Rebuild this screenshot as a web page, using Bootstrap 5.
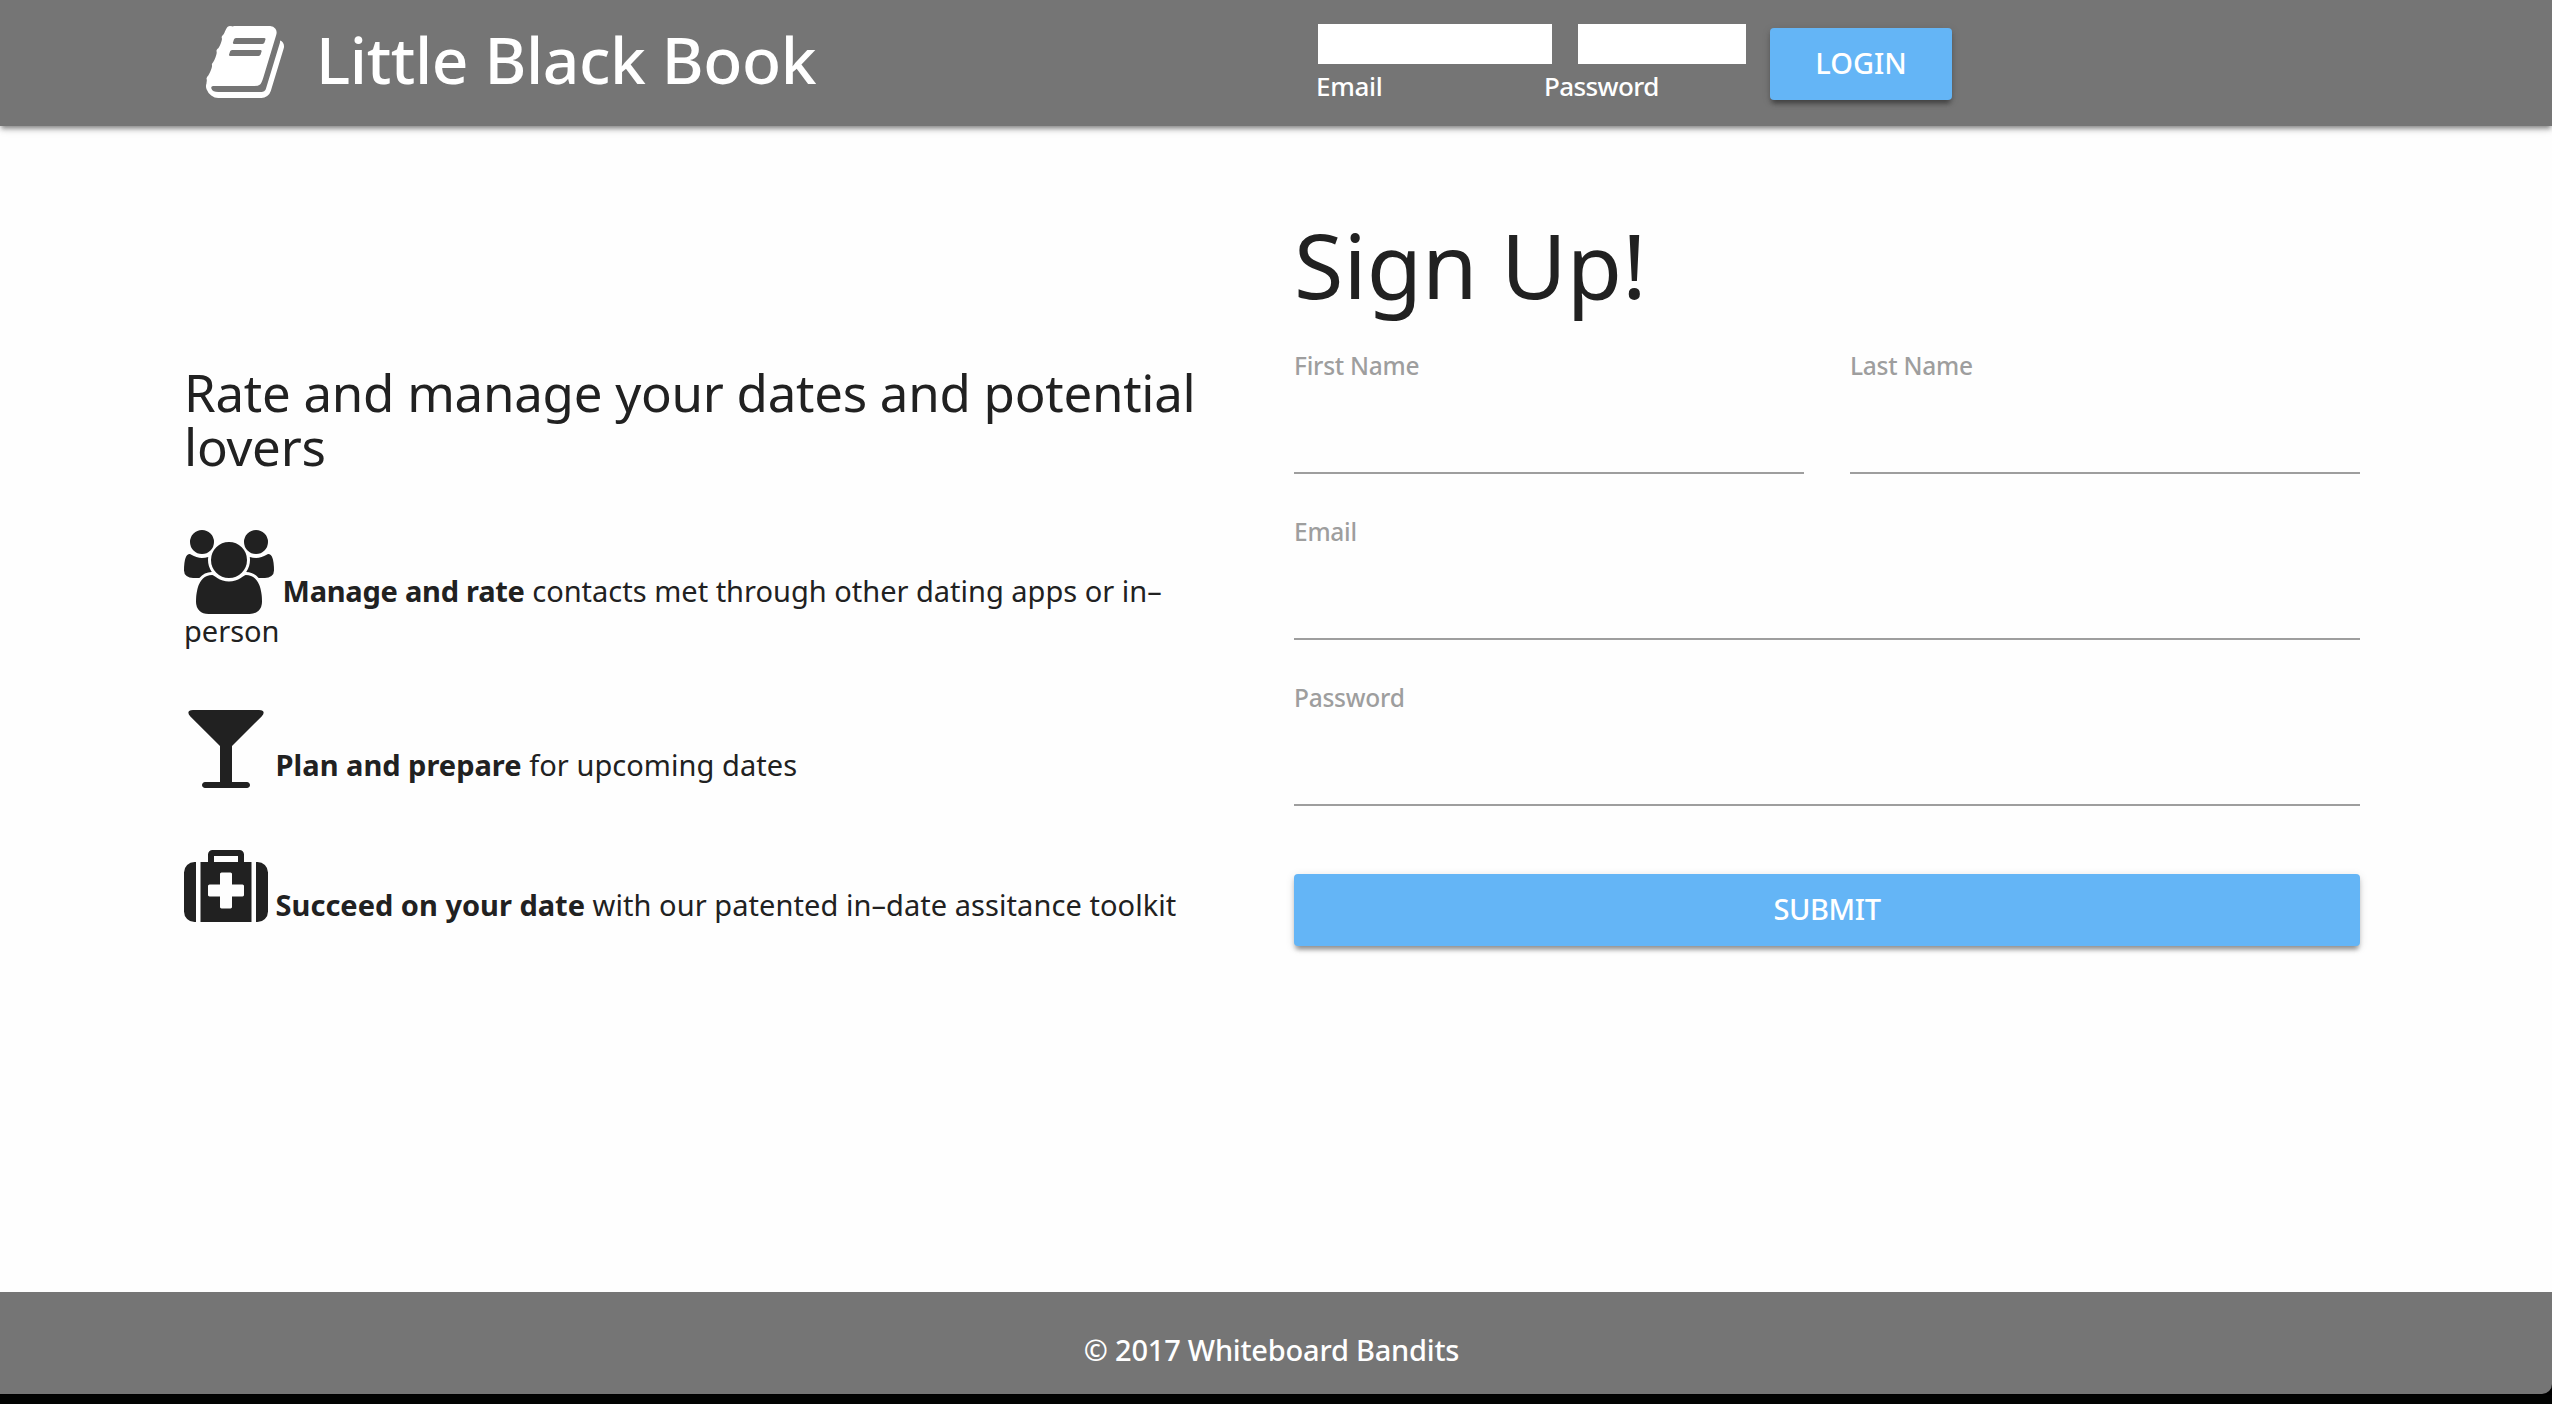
<!DOCTYPE html>
<html lang="en">
<head>
<meta charset="utf-8">
<meta name="viewport" content="width=device-width, initial-scale=1">
<title>Little Black Book</title>
<link href="https://cdn.jsdelivr.net/npm/bootstrap@5.3.0/dist/css/bootstrap.min.css" rel="stylesheet">
<script src="https://cdn.jsdelivr.net/npm/bootstrap@5.3.0/dist/js/bootstrap.bundle.min.js"></script>
<style>
  body { font-family: "Noto Sans", sans-serif; font-size: 29px; color: #212121; background: #000; height: 1404px; overflow: hidden; }
  .site-nav { height: 126px; background: #757575; color: #fff; padding: 0 184px 0 203px; box-shadow: 0 4px 5px rgba(0,0,0,.14), 0 2px 10px rgba(0,0,0,.12), 0 4px 4px -2px rgba(0,0,0,.3); z-index: 1; }
  .brand-box { width: 1113px; padding-top: 20px; gap: 29px; }
  .brand-title { font-size: 64px; font-weight: 500; line-height: 64px; letter-spacing: -.38px; padding-top: 8px; }
  .login-area { width: 438px; padding-top: 24px; }
  .login-area .form-control { height: 40px; border: 0; border-radius: 0; background: #fff; }
  .login-inputs { padding-left: 2px; gap: 26px; margin-bottom: 4px; }
  .in-email { width: 234px; }
  .in-pass { width: 168px; }
  .login-labels { font-size: 26px; line-height: 36px; font-weight: 500; }
  .login-labels label:first-child { width: 228px; letter-spacing: -.3px; }
  .login-labels label:last-child { letter-spacing: -.6px; }
  .btn-sky { --bs-btn-color: #fff; --bs-btn-bg: #64b5f6; --bs-btn-hover-color: #fff; --bs-btn-hover-bg: #7cc0f7; height: 72px; border: 0; border-radius: 4px; padding: 0 0 2px; font-size: 29px; font-weight: 500; text-transform: uppercase; box-shadow: 0 4px 4px rgba(0,0,0,.16), 0 2px 10px rgba(0,0,0,.12), 0 6px 4px -3px rgba(0,0,0,.25); }
  .btn-login { width: 182px; margin: 28px 0 0 16px; }
  .btn-submit { letter-spacing: -.4px; }
  .page-main { background: #fefefe; padding: 0 192px 0 184px; gap: 84px; }
  .pitch { width: 1026px; padding-top: 239px; }
  .pitch h1 { font-size: 51px; line-height: 54px; font-weight: 400; letter-spacing: -.26px; margin: 0 0 57px; }
  .pitch p { line-height: 34px; margin: 0 0 56px; letter-spacing: .06px; }
  .pitch p:first-of-type { letter-spacing: 0; }
  .pitch p:first-of-type strong { letter-spacing: -.25px; margin-left: 1px; }
  .pitch strong { letter-spacing: 0; }
  .fa-glyph { height: 84px; width: 84px; fill: currentColor; vertical-align: -12px; }
  .fa-wide { width: 90px; }
  .signup { width: 1066px; padding-top: 88px; }
  .signup h2 { font-size: 90px; line-height: 100px; font-weight: 400; letter-spacing: 0; margin-bottom: 34px; }
  .field-label { display: block; font-size: 24.5px; line-height: 36px; font-weight: 500; letter-spacing: -.25px; color: #9e9e9e; }
  .line-input { height: 90px; border: 0; border-bottom: 2px solid #9e9e9e; border-radius: 0; background: transparent; }
  .fields { gap: 40px; margin-bottom: 68px; }
  .name-fields { gap: 46px; }
  .site-foot { height: 102px; background: #757575; color: #fff; font-weight: 500; letter-spacing: -.22px; line-height: 40px; padding-top: 38px; padding-right: 9px; border-bottom-right-radius: 10px; }
  .desk-strip { height: 10px; background: #020302; border-top: 1px solid #000; }
</style>
</head>
<body class="d-flex flex-column">
  <header class="site-nav d-flex align-items-start flex-shrink-0 position-relative">
    <div class="brand-box d-flex align-items-start flex-shrink-0">
      <svg class="fa-glyph" viewBox="0 0 1792 1792"><path d="M1703 478q40 57 18 129l-275 906q-19 64-76.500 107.500t-122.500 43.500h-923q-77 0-148.500-53.500t-99.500-131.500q-24-67-2-127 0-4 3-27t4-37q1-8-3-21.500t-3-19.500q2-11 8-21t16.500-23.500 16.500-23.500q23-38 45-91.500t30-91.500q3-10 .5-30t-.5-28q3-11 17-28t17-23q21-36 42-92t25-90q1-9-2.500-32t.5-28q4-13 22-30.500t22-22.500q19-26 42.500-84.500t27.500-96.500q1-8-3-25.500t-2-26.500q2-8 9-18t18-23 17-21q8-12 16.500-30.500t15-35 16-36 19.500-32 26.500-23.500 36-11.500 47.500 5.500l-1 3q38-9 51-9h761q74 0 114 56t18 130l-274 906q-36 119-71.500 153.500t-128.500 34.500h-869q-27 0-38 15-11 16-1 43 24 70 144 70h923q29 0 56-15.500t35-41.500l300-987q7-22 5-57 38 15 59 43zm-1064 2q-4 13 2 22.500t20 9.500h608q13 0 25.500-9.500t16.500-22.500l21-64q4-13-2-22.500t-20-9.500h-608q-13 0-25.500 9.500t-16.500 22.500zm-83 256q-4 13 2 22.500t20 9.500h608q13 0 25.500-9.500t16.500-22.500l21-64q4-13-2-22.500t-20-9.500h-608q-13 0-25.500 9.500t-16.500 22.500z"/></svg>
      <div class="brand-title text-nowrap">Little Black Book</div>
    </div>
    <div class="login-area flex-shrink-0">
      <div class="login-inputs d-flex">
        <input id="le" type="email" class="form-control in-email">
        <input id="lp" type="password" class="form-control in-pass">
      </div>
      <div class="login-labels d-flex"><label for="le">Email</label><label for="lp">Password</label></div>
    </div>
    <button type="button" class="btn btn-sky btn-login">Login</button>
  </header>

  <main class="page-main d-flex flex-grow-1">
    <section class="pitch flex-shrink-0">
      <h1>Rate and manage your dates and potential lovers</h1>
      <p><svg class="fa-glyph fa-wide" viewBox="64 0 1920 1792"><path d="M657 896q-162 5-265 128h-134q-82 0-138-40.500t-56-118.500q0-353 124-353 6 0 43.500 21t97.500 42.500 119 21.500q67 0 133-23-5 37-5 66 0 139 81 256zm1071 637q0 120-73 189.500t-194 69.500h-874q-121 0-194-69.500t-73-189.500q0-53 3.500-103.500t14-109 26.500-108.500 43-97.500 62-81 85.500-53.500 111.500-20q10 0 43 21.500t73 48 107 48 135 21.500 135-21.500 107-48 73-48 43-21.500q61 0 111.500 20t85.500 53.500 62 81 43 97.500 26.500 108.500 14 109 3.500 103.500zm-1024-1277q0 106-75 181t-181 75-181-75-75-181 75-181 181-75 181 75 75 181zm704 384q0 159-112.500 271.500t-271.500 112.500-271.500-112.500-112.500-271.500 112.500-271.500 271.500-112.500 271.500 112.500 112.500 271.500zm576 225q0 78-56 118.500t-138 40.500h-134q-103-123-265-128 81-117 81-256 0-29-5-66 66 23 133 23 59 0 119-21.500t97.500-42.500 43.500-21q124 0 124 353zm-128-609q0 106-75 181t-181 75-181-75-75-181 75-181 181-75 181 75 75 181z"/></svg> <strong>Manage and rate</strong> contacts met through other dating apps or in–<br>person</p>
      <p><svg class="fa-glyph" viewBox="0 0 1792 1792"><path d="M1699 186q0 35-43 78l-632 632v768h320q26 0 45 19t19 45-19 45-45 19h-896q-26 0-45-19t-19-45 19-45 45-19h320v-768l-632-632q-43-43-43-78 0-23 18-36.500t38-17.500 43-4h1408q23 0 43 4t38 17.500 18 36.500z"/></svg> <strong>Plan and prepare</strong> for upcoming dates</p>
      <p><svg class="fa-glyph" viewBox="0 0 1792 1792"><path fill-rule="evenodd" d="M256 384v1280h-32q-92 0-158-66t-66-158v-832q0-92 66-158t158-66zM1440 384v1280h-1088v-1280h160v-160q0-40 28-68t68-28h576q40 0 68 28t28 68v160zM640 384h512v-128h-512zM1280 1088v-192q0-14-9-23t-23-9h-224v-224q0-14-9-23t-23-9h-192q-14 0-23 9t-9 23v224h-224q-14 0-23 9t-9 23v192q0 14 9 23t23 9h224v224q0 14 9 23t23 9h192q14 0 23-9t9-23v-224h224q14 0 23-9t9-23zM1792 608v832q0 92-66 158t-158 66h-32v-1280h32q92 0 158 66t66 158z"/></svg> <strong>Succeed on your date</strong> with our patented in–date assitance toolkit</p>
    </section>

    <section class="signup flex-shrink-0">
      <h2>Sign Up!</h2>
      <form>
        <div class="fields d-flex flex-column">
          <div class="name-fields d-flex">
            <div class="flex-fill"><label class="field-label" for="fn">First Name</label><input id="fn" type="text" class="form-control line-input"></div>
            <div class="flex-fill"><label class="field-label" for="ln">Last Name</label><input id="ln" type="text" class="form-control line-input"></div>
          </div>
          <div><label class="field-label" for="em">Email</label><input id="em" type="email" class="form-control line-input"></div>
          <div><label class="field-label" for="pw">Password</label><input id="pw" type="password" class="form-control line-input"></div>
        </div>
        <button type="button" class="btn btn-sky btn-submit w-100">Submit</button>
      </form>
    </section>
  </main>

  <div class="page-base flex-shrink-0">
    <footer class="site-foot text-center">© 2017 Whiteboard Bandits</footer>
    <div class="desk-strip"></div>
  </div>
</body>
</html>
